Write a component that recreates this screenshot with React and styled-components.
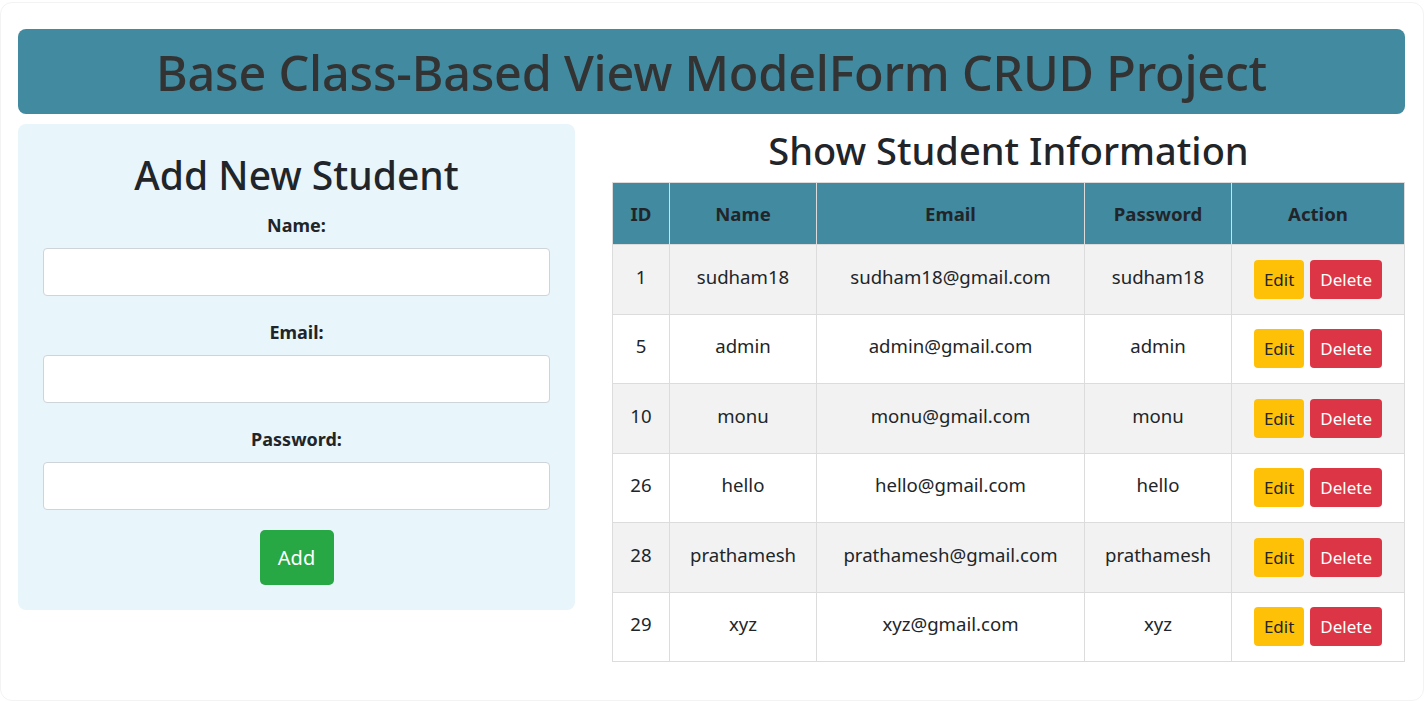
import React from "react";
import styled, { createGlobalStyle } from "styled-components";

const GlobalStyle = createGlobalStyle`
  html, body {
    margin: 0;
    padding: 0;
    background: #fff;
  }
  body {
    font-family: "Noto Sans", "Open Sans", sans-serif;
    color: #212529;
  }
  * {
    box-sizing: border-box;
  }
`;

const theme = {
  teal: "#418a9f",
  card: "#e8f5fb",
  border: "#dcdcdc",
  stripe: "#f2f2f2",
};

const Page = styled.div`
  margin: 2px 1px 0 0;
  min-height: 699px;
  border: 1px solid #f3f3f3;
  border-radius: 12px;
  padding: 26px 18px 30px 17px;
`;

const Banner = styled.div`
  height: 85px;
  background: ${theme.teal};
  border-radius: 8px;
  display: flex;
  align-items: center;
  justify-content: center;
  margin-bottom: 10px;
  h1 {
    margin: 0;
    font-size: 48.5px;
    font-weight: 500;
    color: #333;
    letter-spacing: -0.2px;
  }
`;

const Row = styled.div`
  display: flex;
  align-items: flex-start;
  gap: 37px;
`;

const FormCard = styled.form`
  width: 557px;
  flex: none;
  background: ${theme.card};
  border-radius: 8px;
  padding: 26px 25px 25px;
  display: flex;
  flex-direction: column;
  align-items: center;
`;

const Title = styled.h2`
  margin: ${(p) => p.$margin || "0"};
  font-size: ${(p) => p.$size || 39}px;
  line-height: ${(p) => p.$lh || 50}px;
  font-weight: 500;
  color: #212529;
  text-align: center;
`;

const Field = styled.div`
  width: 100%;
  display: flex;
  flex-direction: column;
  align-items: center;
  margin-bottom: ${(p) => (p.$last ? 20 : 24)}px;
`;

const Label = styled.label`
  font-size: 18px;
  line-height: 24px;
  font-weight: 700;
  margin-bottom: 11px;
`;

const Input = styled.input`
  width: 100%;
  height: 48px;
  border: 1px solid #ced4da;
  border-radius: 4px;
  background: #fff;
  padding: 6px 12px;
  font-size: 18px;
  font-family: inherit;
`;

const AddButton = styled.button`
  width: 74px;
  height: 55px;
  border: none;
  border-radius: 5px;
  background: #28a745;
  color: #fff;
  font-size: 20px;
  font-family: inherit;
`;

const TablePanel = styled.div`
  flex: 1;
  display: flex;
  flex-direction: column;
  padding-top: 2px;
`;

const Table = styled.table`
  width: 100%;
  border-collapse: collapse;
  table-layout: fixed;
  font-size: 18.6px;
  th,
  td {
    border: 1px solid ${theme.border};
    text-align: center;
    vertical-align: middle;
    padding: 0 6px;
  }
  th {
    background: ${theme.teal};
    height: 62px;
    font-weight: 700;
    color: #212529;
  }
  td {
    height: 69.5px;
    padding-bottom: 6px;
  }
  tbody tr:nth-child(odd) td {
    background: ${theme.stripe};
  }
`;

const Actions = styled.div`
  display: flex;
  justify-content: center;
  gap: 6px;
  margin-top: 6px;
`;

const SmallButton = styled.button`
  height: 39px;
  padding: 0 10px;
  border: none;
  border-radius: 4px;
  font-size: 17px;
  font-family: inherit;
  background: ${(p) => (p.$danger ? "#dc3545" : "#ffc107")};
  color: ${(p) => (p.$danger ? "#fff" : "#212529")};
`;

const students = [
  { id: 1, name: "sudham18", email: "sudham18@gmail.com", password: "sudham18" },
  { id: 5, name: "admin", email: "admin@gmail.com", password: "admin" },
  { id: 10, name: "monu", email: "monu@gmail.com", password: "monu" },
  { id: 26, name: "hello", email: "hello@gmail.com", password: "hello" },
  { id: 28, name: "prathamesh", email: "prathamesh@gmail.com", password: "prathamesh" },
  { id: 29, name: "xyz", email: "xyz@gmail.com", password: "xyz" },
];

export default function App() {
  return (
    <>
      <GlobalStyle />
      <Page>
        <Banner>
          <h1>Base Class-Based View ModelForm CRUD Project</h1>
        </Banner>
        <Row>
          <FormCard onSubmit={(e) => e.preventDefault()}>
            <Title $margin="0 0 13px">Add New Student</Title>
            <Field>
              <Label>Name:</Label>
              <Input type="text" />
            </Field>
            <Field>
              <Label>Email:</Label>
              <Input type="email" />
            </Field>
            <Field $last>
              <Label>Password:</Label>
              <Input type="password" />
            </Field>
            <AddButton type="submit">Add</AddButton>
          </FormCard>
          <TablePanel>
            <Title $size={38} $lh={48} $margin="0 0 8px">
              Show Student Information
            </Title>
            <Table>
              <colgroup>
                <col style={{ width: 57 }} />
                <col style={{ width: 147 }} />
                <col style={{ width: 268 }} />
                <col style={{ width: 147 }} />
                <col />
              </colgroup>
              <thead>
                <tr>
                  <th>ID</th>
                  <th>Name</th>
                  <th>Email</th>
                  <th>Password</th>
                  <th>Action</th>
                </tr>
              </thead>
              <tbody>
                {students.map((s) => (
                  <tr key={s.id}>
                    <td>{s.id}</td>
                    <td>{s.name}</td>
                    <td>{s.email}</td>
                    <td>{s.password}</td>
                    <td>
                      <Actions>
                        <SmallButton>Edit</SmallButton>
                        <SmallButton $danger>Delete</SmallButton>
                      </Actions>
                    </td>
                  </tr>
                ))}
              </tbody>
            </Table>
          </TablePanel>
        </Row>
      </Page>
    </>
  );
}
